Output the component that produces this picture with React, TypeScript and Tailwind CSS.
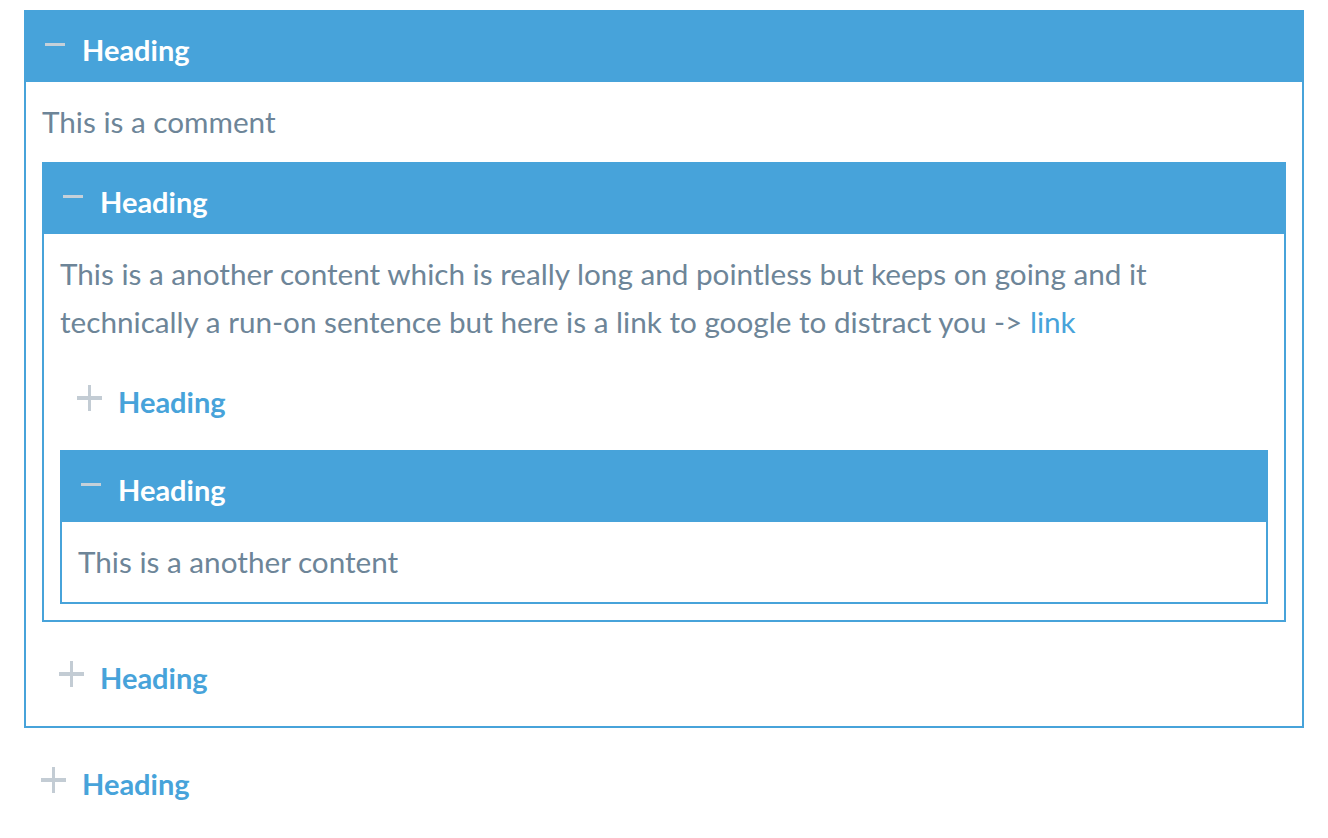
import React from "react"

const font = { fontFamily: "Lato, 'Open Sans', sans-serif" }

function Icon({ open }: { open: boolean }) {
  return (
    <svg width="26" height="26" viewBox="0 0 26 26" className="shrink-0">
      {open ? (
        <rect x="5" y="10" width="20" height="3" fill="#c5d0d9" />
      ) : (
        <>
          <rect x="1" y="11" width="25" height="4" fill="#c3ccd4" />
          <rect x="12" y="0" width="3" height="26" fill="#c3ccd4" />
        </>
      )}
    </svg>
  )
}

function Header({ open, title }: { open: boolean; title: string }) {
  return (
    <div
      className={
        "flex h-[72px] items-center gap-4 px-4 " +
        (open ? "bg-[#47a3da] text-white" : "text-[#47a3da]")
      }
    >
      <Icon open={open} />
      <span className="mt-[6px] text-[29px] font-bold leading-none">{title}</span>
    </div>
  )
}

function Section({
  title,
  open = false,
  children,
}: {
  title: string
  open?: boolean
  children?: React.ReactNode
}) {
  if (!open) return <Header open={false} title={title} />
  return (
    <div>
      <Header open title={title} />
      <div className="flex flex-col gap-4 border-2 border-t-0 border-[#47a3da] p-4">{children}</div>
    </div>
  )
}

export default function App() {
  return (
    <div className="min-h-screen bg-white px-6 pt-[10px]" style={font}>
      <div className="flex flex-col gap-4 text-[29.7px] leading-[48px] text-[#6d8598]">
        <Section title="Heading" open>
          <p>This is a comment</p>
          <Section title="Heading" open>
            <p>
              This is a another content which is really long and pointless but keeps on going and it
              technically a run-on sentence but here is a link to google to distract you -&gt;{" "}
              <a href="#" className="text-[#47a3da]">
                link
              </a>
            </p>
            <Section title="Heading" />
            <Section title="Heading" open>
              <p>This is a another content</p>
            </Section>
          </Section>
          <Section title="Heading" />
        </Section>
        <Section title="Heading" />
      </div>
    </div>
  )
}
